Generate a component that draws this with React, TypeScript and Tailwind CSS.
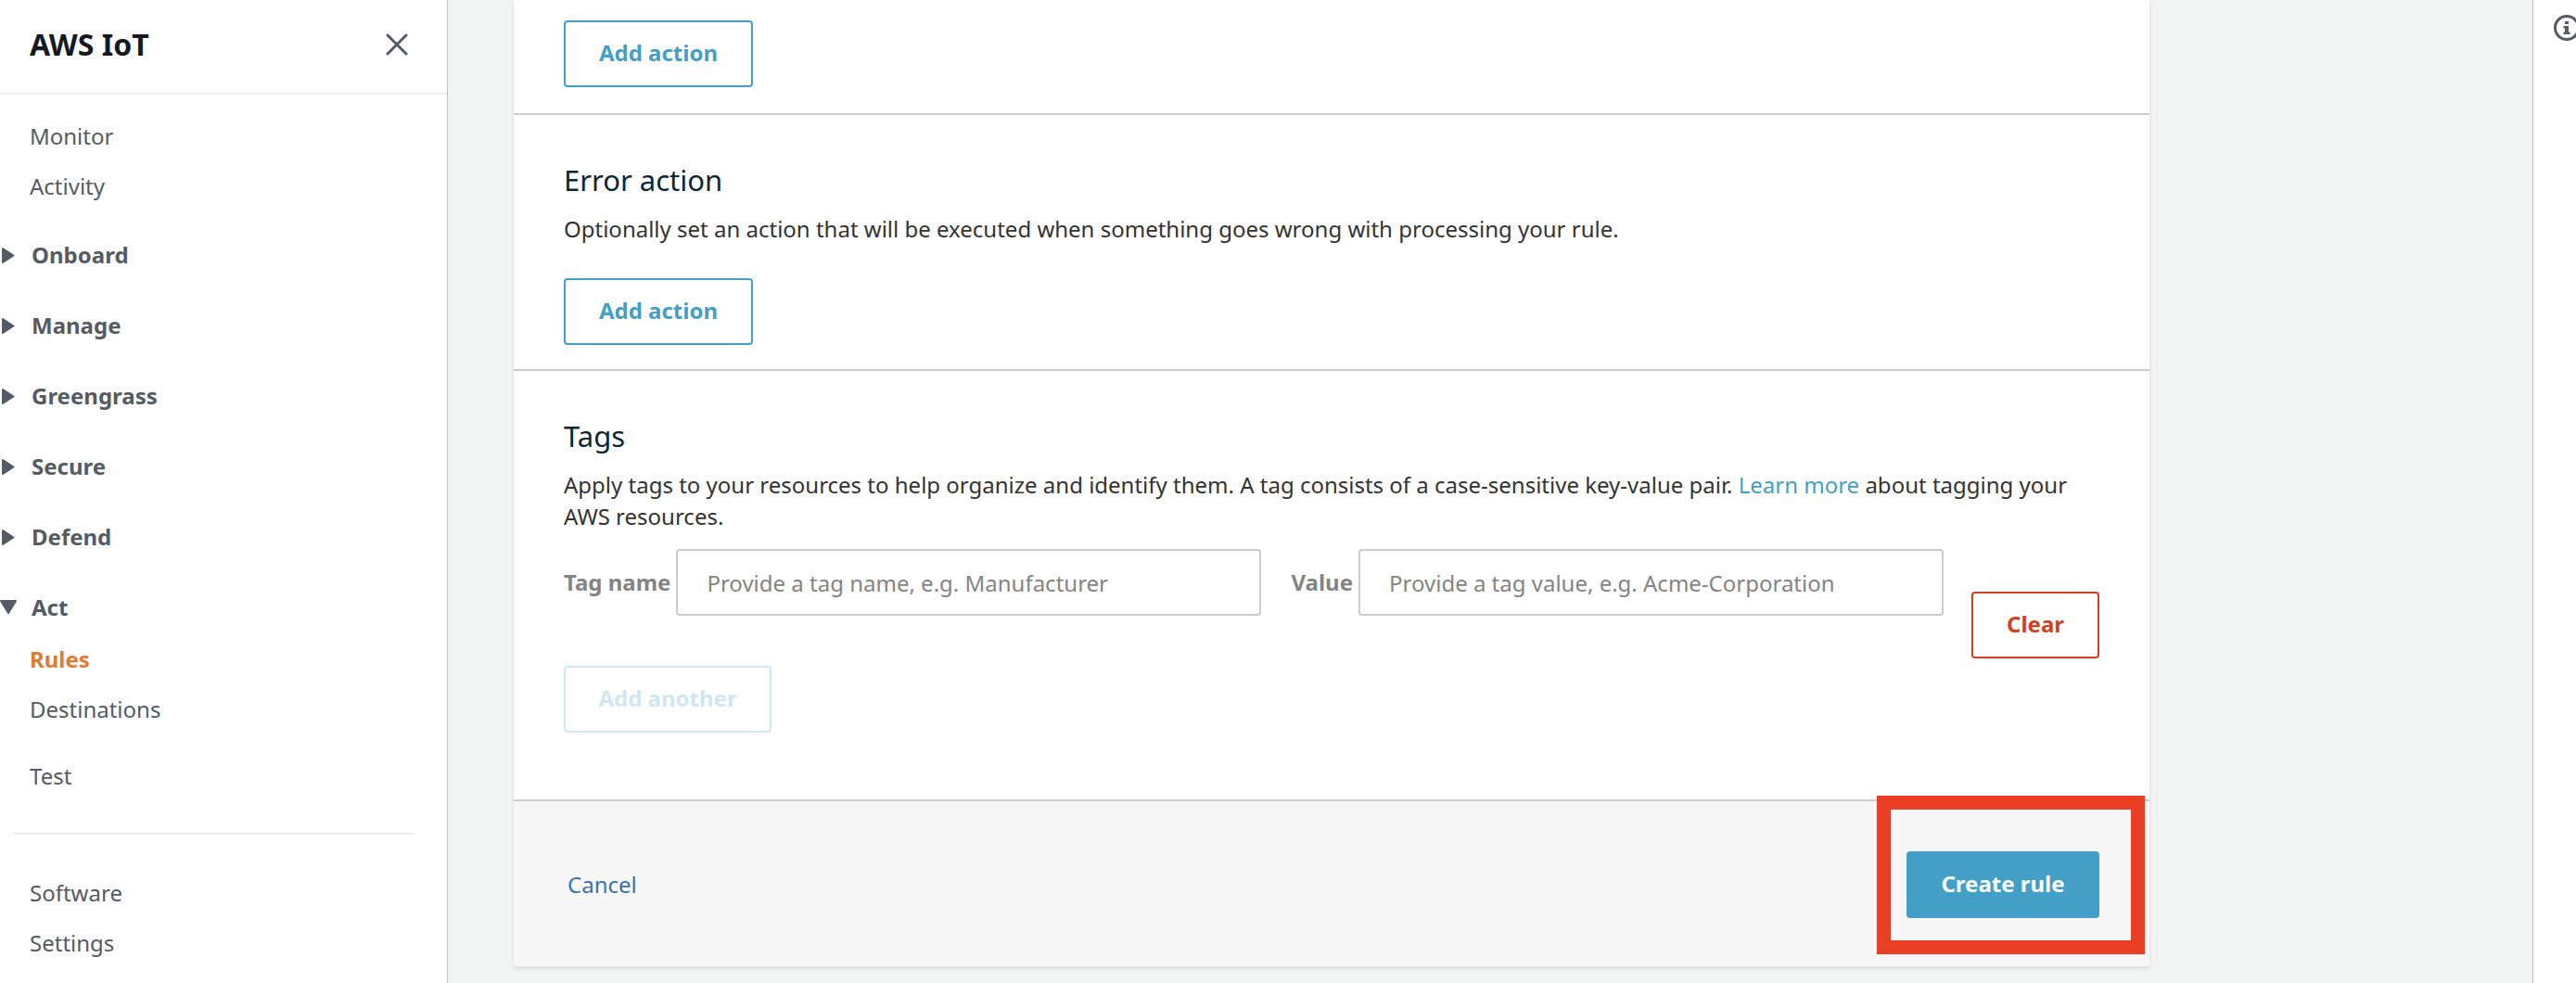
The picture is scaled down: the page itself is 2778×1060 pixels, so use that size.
import type { ReactNode } from 'react';

type GroupProps = { label: string; open?: boolean };

function NavLink({ label, active = false }: { label: string; active?: boolean }) {
  return (
    <a
      href="#"
      className={active ? 'block pl-8 font-bold text-[#e07b35]' : 'block pl-8 text-[#545b64]'}
    >
      {label}
    </a>
  );
}

function NavGroup({ label, open = false }: GroupProps) {
  return (
    <button type="button" aria-expanded={open} className="flex items-center gap-4 text-left font-bold">
      <svg viewBox="0 0 18 18" className="size-[18px] shrink-0" fill="#545b64" stroke="#545b64" strokeWidth="2" strokeLinejoin="round" aria-hidden="true">
        {open ? <path d="M1 2h16L9 15z" /> : <path d="M3 2v15l11.500-7.500z" />}
      </svg>
      {label}
    </button>
  );
}

function OutlineButton({ children }: { children: ReactNode }) {
  return (
    <button type="button" className="h-[72px] min-w-[204px] rounded-sm border-2 border-[#439fc5] px-8 pb-0.5 font-bold text-[#439fc5]">
      {children}
    </button>
  );
}

function TagField({ id, label, placeholder }: { id: string; label: string; placeholder: string }) {
  return (
    <div className="flex min-w-0 flex-auto items-center gap-1.5">
      <label htmlFor={id} className="shrink-0 font-bold text-[#848484]">
        {label}
      </label>
      <input
        id={id}
        type="text"
        placeholder={placeholder}
        className="h-[72px] w-[630px] min-w-0 flex-auto rounded-sm border-2 border-[#ccc] px-[31px] placeholder:text-[#848484]"
      />
    </div>
  );
}

export default function App() {
  return (
    <div className="flex min-h-screen overflow-hidden bg-[#f2f3f3] font-['Noto_Sans',sans-serif] text-[24px] leading-[34px] text-[#333]">
      <aside className="w-[483px] shrink-0 border-r border-[#bfc4c4] bg-white text-[#545b64]">
        <header className="flex h-[102px] items-center justify-between border-b-2 border-[#eaeded] pr-[42px] pb-1 pl-8">
          <h1 className="text-[32px] leading-10 font-bold text-[#16191f]">AWS IoT</h1>
          <button type="button" aria-label="Close navigation">
            <svg viewBox="0 0 24 24" className="size-6" fill="none" stroke="#545b64" strokeWidth="3" strokeLinecap="round" aria-hidden="true">
              <path d="M2 2l20 20M22 2L2 22" />
            </svg>
          </button>
        </header>
        <nav aria-label="AWS IoT" className="flex flex-col pt-7">
          <div className="flex flex-col gap-5">
            <NavLink label="Monitor" />
            <NavLink label="Activity" />
          </div>
          <div className="mt-10 flex flex-col gap-[42px]">
            <NavGroup label="Onboard" />
            <NavGroup label="Manage" />
            <NavGroup label="Greengrass" />
            <NavGroup label="Secure" />
            <NavGroup label="Defend" />
            <NavGroup label="Act" open />
          </div>
          <div className="mt-[22px] flex flex-col gap-5">
            <NavLink label="Rules" active />
            <NavLink label="Destinations" />
          </div>
          <div className="mt-[38px]">
            <NavLink label="Test" />
          </div>
          <hr className="mt-11 mr-9 mb-[46px] ml-[14px] border-t-2 border-[#eaeded]" />
          <div className="flex flex-col gap-5">
            <NavLink label="Software" />
            <NavLink label="Settings" />
          </div>
        </nav>
      </aside>

      <main className="min-w-0 flex-1 pl-[71px]">
        <form className="max-w-[1764px] bg-white shadow-[0_2px_4px_0_rgba(0,28,36,0.12)]">
          <section className="flex border-b-2 border-[#ccc] px-[54px] pt-[22px] pb-7">
            <OutlineButton>Add action</OutlineButton>
          </section>

          <section className="flex flex-col items-start border-b-2 border-[#ccc] px-[54px] pt-[50px] pb-[26px]">
            <h2 className="text-[31px] leading-10 text-[#0b2733]">Error action</h2>
            <p className="mt-4 mb-9">
              Optionally set an action that will be executed when something goes wrong with processing your rule.
            </p>
            <OutlineButton>Add action</OutlineButton>
          </section>

          <section className="border-b-2 border-[#ccc] px-[54px] pt-[50px] pb-[72px]">
            <h2 className="text-[31px] leading-10 text-[#0b2733]">Tags</h2>
            <p className="mt-4">
              Apply tags to your resources to help organize and identify them. A tag consists of a case-sensitive
              key-value pair.{' '}
              <a href="#" className="text-[#439fc5]">
                Learn more
              </a>{' '}
              about tagging your AWS resources.
            </p>
            <div className="mt-[18px] flex items-start">
              <div className="flex min-w-0 flex-1 gap-8">
                <TagField id="tag-name" label="Tag name" placeholder="Provide a tag name, e.g. Manufacturer" />
                <TagField id="tag-value" label="Value" placeholder="Provide a tag value, e.g. Acme-Corporation" />
              </div>
              <button type="button" className="mt-[46px] ml-[30px] h-[72px] w-[138px] shrink-0 rounded-sm border-2 border-[#d13f23] pb-0.5 font-bold text-[#d13f23]">
                Clear
              </button>
            </div>
            <button type="button" disabled className="mt-2 block h-[72px] min-w-[224px] rounded-sm border-2 border-[#d0e7f1] px-8 pb-0.5 font-bold text-[#d0e7f1]">
              Add another
            </button>
          </section>

          <footer className="flex items-center justify-between bg-[#f7f7f7] pt-[54px] pr-[54px] pb-[52px] pl-[58px]">
            <a href="#" className="text-[#3a73b0]">
              Cancel
            </a>
            <div className="relative">
              <button type="submit" className="block h-[72px] min-w-[208px] rounded-sm bg-[#439fc5] px-8 pb-0.5 font-bold text-white">
                Create rule
              </button>
              <div className="pointer-events-none absolute -top-[60px] -right-[49px] -bottom-[39px] -left-8 border-[15px] border-[#eb3f25]" />
            </div>
          </footer>
        </form>
      </main>

      <aside className="w-[47px] shrink-0 overflow-hidden border-l border-[#bfc4c4] bg-white pt-4 pl-[22px]">
        <button type="button" aria-label="Open help panel" className="block w-7">
          <svg viewBox="0 0 28 28" className="size-7 max-w-none" fill="none" stroke="#545b64" strokeWidth="3" aria-hidden="true">
            <circle cx="14" cy="14" r="12.500" />
            <path d="M12 7h4v3h-4zM10.500 12H16v6.500h1.500V21h-7v-2.500H12v-4h-1.500z" fill="#545b64" stroke="none" />
          </svg>
        </button>
      </aside>
    </div>
  );
}
